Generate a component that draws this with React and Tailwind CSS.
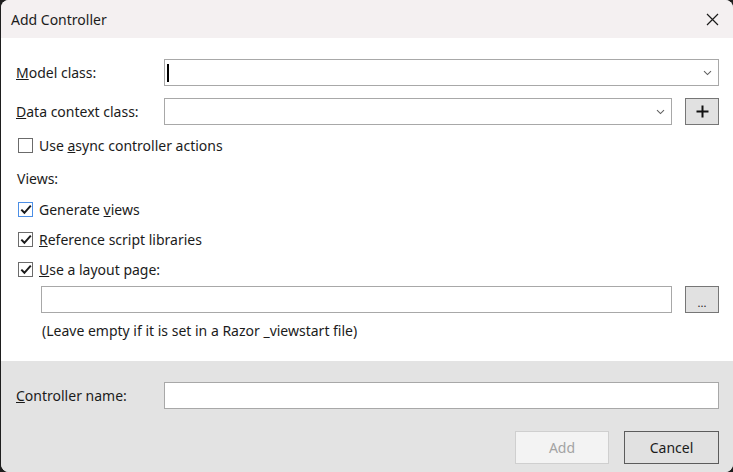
import React from 'react'

const font = { fontFamily: '"Noto Sans", "Open Sans", sans-serif' }

function Chevron() {
  return (
    <svg width="9" height="6" viewBox="0 0 9 6" className="text-[#606060]">
      <path d="M1 1.2 L4.5 4.6 L8 1.2" fill="none" stroke="currentColor" strokeWidth="1.1" />
    </svg>
  )
}

function Check({ checked, focused }) {
  return (
    <span
      className={`flex h-[15px] w-[15px] shrink-0 items-center justify-center border bg-white ${
        focused ? 'border-[#4c8fe6]' : 'border-[#6b6b6b]'
      }`}
    >
      {checked && (
        <svg width="12" height="11" viewBox="0 0 12 11">
          <path d="M1.3 5.6 L4.4 8.8 L10.8 1.6" fill="none" stroke="#1b1b1b" strokeWidth="2" />
        </svg>
      )}
    </span>
  )
}

function CheckRow({ checked, focused, children }) {
  return (
    <label className="flex h-[22px] items-center gap-[6px] pl-[17px] text-[14px] text-[#1b1b1b]">
      <Check checked={checked} focused={focused} />
      <span>{children}</span>
    </label>
  )
}

export default function App() {
  return (
    <div className="h-[472px] w-[733px] overflow-hidden bg-[#1e1e1e] pl-px" style={font}>
      <div className="flex h-full flex-col overflow-hidden rounded-[8px] bg-white">
        {/* Title bar */}
        <div className="flex h-[38px] shrink-0 items-center justify-between bg-[#f4f0f1] pl-[10px] pr-[14px]">
          <span className="text-[14px] text-[#1b1b1b]">Add Controller</span>
          <svg width="13" height="13" viewBox="0 0 13 13">
            <path d="M1 1 L12 12 M12 1 L1 12" stroke="#1b1b1b" strokeWidth="1.2" />
          </svg>
        </div>

        {/* Body */}
        <div className="flex flex-col pt-[21px]">
          <div className="flex h-[27px] items-center pl-[15px] pr-[14px]">
            <span className="w-[148px] text-[14px] text-[#1b1b1b]">
              <span className="underline">M</span>odel class:
            </span>
            <div className="flex h-[27px] flex-1 items-center justify-between border border-[#a8a8a8] pl-[2px] pr-[6px]">
              <span className="h-[18px] w-[2px] bg-black" />
              <Chevron />
            </div>
          </div>

          <div className="mt-[12px] flex h-[27px] items-center pl-[15px] pr-[14px]">
            <span className="w-[148px] text-[14px] text-[#1b1b1b]">
              <span className="underline">D</span>ata context class:
            </span>
            <div className="flex h-[27px] flex-1 items-center justify-end border border-[#a8a8a8] pr-[6px]">
              <Chevron />
            </div>
            <button className="ml-[13px] flex h-[27px] w-[34px] items-center justify-center border border-[#767676] bg-[#e1e1e1]">
              <svg width="13" height="13" viewBox="0 0 13 13">
                <path d="M6.5 0.5 V12.5 M0.5 6.5 H12.5" stroke="#111" strokeWidth="2" />
              </svg>
            </button>
          </div>

          <div className="mt-[9px]">
            <CheckRow>
              Use <span className="underline">a</span>sync controller actions
            </CheckRow>
          </div>

          <div className="mt-[11px] flex h-[22px] items-center pl-[16px] text-[14px] text-[#1b1b1b]">Views:</div>

          <div className="mt-[9px] flex flex-col gap-[8px]">
            <CheckRow checked focused>
              Generate <span className="underline">v</span>iews
            </CheckRow>
            <CheckRow checked>
              <span className="underline">R</span>eference script libraries
            </CheckRow>
            <CheckRow checked>
              <span className="underline">U</span>se a layout page:
            </CheckRow>
          </div>

          <div className="mt-[6px] flex items-center pl-[40px] pr-[14px]">
            <div className="h-[27px] flex-1 border border-[#a8a8a8] bg-white" />
            <button className="ml-[13px] flex h-[27px] w-[34px] items-end justify-center border border-[#767676] bg-[#e1e1e1] pb-[4px] text-[11px] leading-none text-[#1b1b1b]">
              ...
            </button>
          </div>

          <div className="mt-[6px] flex h-[22px] items-center pl-[41px] text-[14px] text-[#1b1b1b]">
            (Leave empty if it is set in a Razor _viewstart file)
          </div>
        </div>

        {/* Footer */}
        <div className="mt-auto flex h-[111px] flex-col bg-[#e3e3e3] pr-[14px] pt-[21px]">
          <div className="flex h-[27px] items-center pl-[15px]">
            <span className="w-[148px] text-[14px] text-[#1b1b1b]">
              <span className="underline">C</span>ontroller name:
            </span>
            <div className="h-[27px] flex-1 border border-[#a8a8a8] bg-white" />
          </div>
          <div className="mt-[22px] flex justify-end gap-[15px]">
            <button className="h-[33px] w-[94px] border border-[#cfcfcf] bg-[#f3f3f3] text-[14px] text-[#a3a3a3]">
              Add
            </button>
            <button className="h-[33px] w-[95px] border border-[#5c5c5c] bg-[#e1e1e1] text-[14px] text-[#1b1b1b]">
              Cancel
            </button>
          </div>
        </div>
      </div>
    </div>
  )
}
